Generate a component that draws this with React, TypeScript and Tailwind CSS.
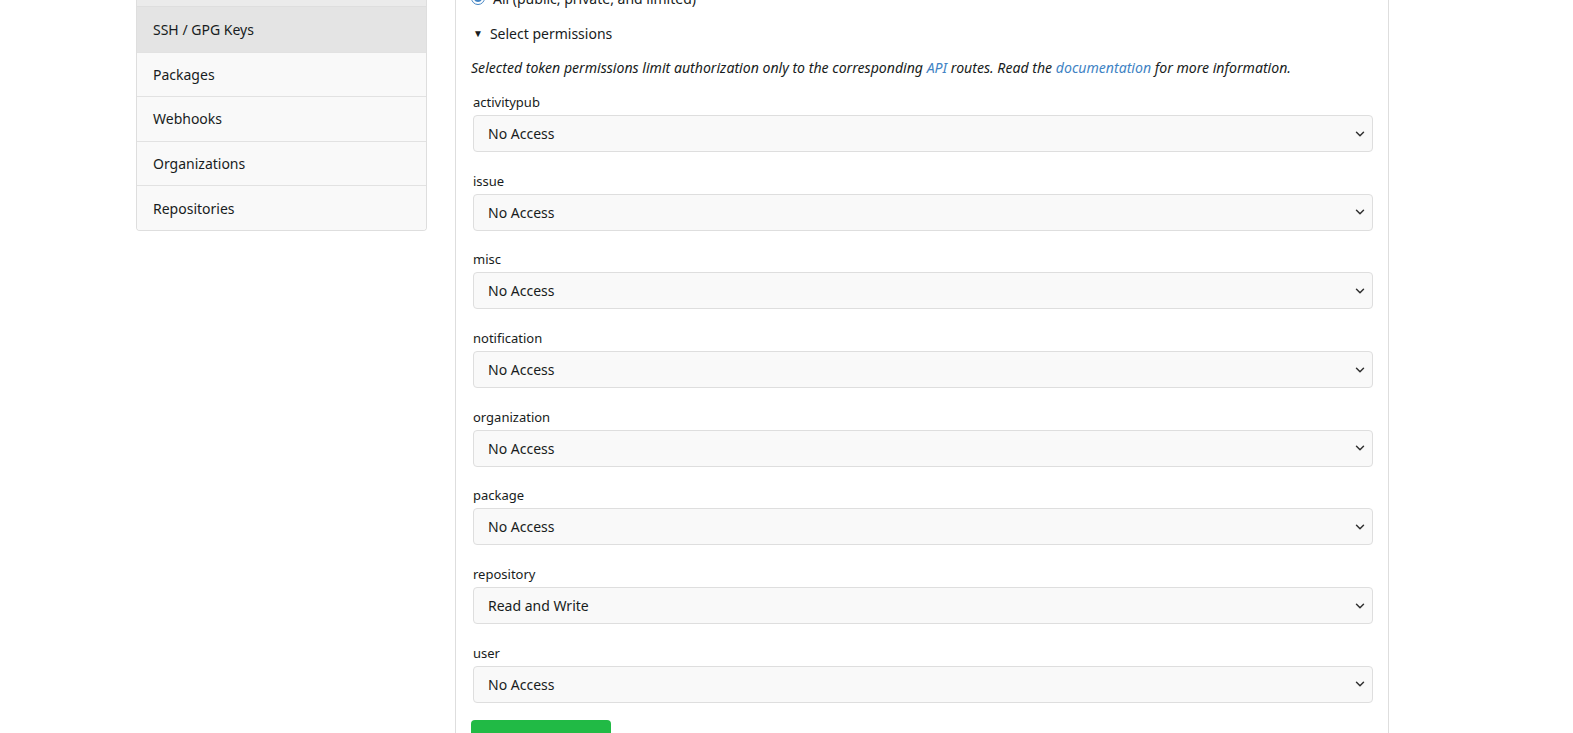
import { ChevronDown } from 'lucide-react'

const nav = ['SSH / GPG Keys', 'Packages', 'Webhooks', 'Organizations', 'Repositories']

const perms: { name: string; value: string }[] = [
  { name: 'activitypub', value: 'No Access' },
  { name: 'issue', value: 'No Access' },
  { name: 'misc', value: 'No Access' },
  { name: 'notification', value: 'No Access' },
  { name: 'organization', value: 'No Access' },
  { name: 'package', value: 'No Access' },
  { name: 'repository', value: 'Read and Write' },
  { name: 'user', value: 'No Access' },
]

function PermSelect({ name, value }: { name: string; value: string }) {
  return (
    <div className="mb-[18.7px]">
      <label className="block h-5 leading-5 text-[13px] text-[#181c21] mb-[3px] pl-[2px]">{name}</label>
      <div className="h-[37px] ml-[2px] flex items-center justify-between rounded-[4px] border border-[#dedede] bg-[#f9f9f9] pl-[14px] pr-[5px]">
        <span className="text-[14px] text-[#181c21]">{value}</span>
        <ChevronDown size={14} strokeWidth={2.5} className="text-[#303030]" />
      </div>
    </div>
  )
}

export default function App() {
  return (
    <div className="min-h-screen bg-white overflow-hidden font-['Noto_Sans',sans-serif]">
      <div className="flex items-start pl-[136px] gap-[28px]">
        <aside className="w-[291px] shrink-0">
          <div className="h-[7px] bg-[#ebebeb] border-x border-b border-[#dedede]" />
          <nav className="border-x border-b border-[#dedede] rounded-b-[4px] overflow-hidden">
            {nav.map((item, i) => (
              <div
                key={item}
                className={
                  'h-[44.6px] flex items-center pl-4 text-[14px] text-[#181c21] ' +
                  (i > 0 ? 'border-t border-[#e2e2e2] ' : '') +
                  (i === 0 ? 'bg-[#e4e4e4]' : 'bg-[#f9f9f9]')
                }
              >
                {item}
              </div>
            ))}
          </nav>
        </aside>

        <main className="w-[934px] shrink-0 border-x border-[#dedede] min-h-[760px] pl-[15px] pr-[15px]">
          <div className="-mt-[12px] h-5 flex items-center gap-2 text-[14px] text-[#181c21]">
            <span className="w-[14px] h-[14px] rounded-full border border-[#4183c4] flex items-center justify-center bg-white">
              <span className="w-[8px] h-[8px] rounded-full bg-[#4183c4]" />
            </span>
            <span>All (public, private, and limited)</span>
          </div>

          <div className="mt-[15px] h-5 flex items-center text-[14px] text-[#181c21] pl-[2px]">
            <span className="text-[10px] mr-[7px]">▼</span>
            Select permissions
          </div>

          <p className="mt-[15px] h-5 leading-5 italic text-[14.1px] text-[#181c21] whitespace-nowrap">
            Selected token permissions limit authorization only to the corresponding{' '}
            <a className="text-[#4183c4]">API</a> routes. Read the{' '}
            <a className="text-[#4183c4]">documentation</a> for more information.
          </p>

          <div className="mt-[14px]">
            {perms.map(p => (
              <PermSelect key={p.name} name={p.name} value={p.value} />
            ))}
          </div>

          <button className="-mt-[2px] w-[140px] h-[38px] rounded-[4px] bg-[#21ba45] text-white text-[14px] font-bold">
            Generate Token
          </button>
        </main>
      </div>
    </div>
  )
}
